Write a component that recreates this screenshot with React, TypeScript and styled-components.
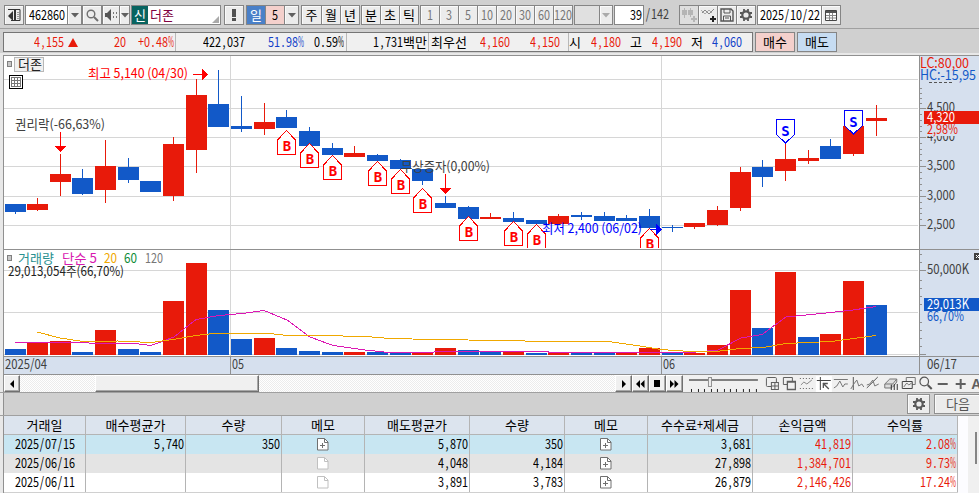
import React from 'react';
import styled, { createGlobalStyle, css } from 'styled-components';

const FONT = '"Noto Sans CJK KR", sans-serif';
const RED = '#e81a0a';
const BLUE = '#1259c8';
const NAVY = '#1240c8';

const GlobalStyle = createGlobalStyle`
  * { box-sizing: border-box; }
  body { margin: 0; overflow: hidden; background: #d0d0d0; font-family: ${FONT}; }
`;

/* ---------- fixed-pitch text: 6px for latin, 12px for hangul ---------- */

const Fixed = styled.span<{ $w?: number; $gap: number; $color: string }>`
  display: flex;
  flex: none;
  ${(p) => p.$w && css`width: ${p.$w}px;`}
  margin-left: ${(p) => p.$gap}px;
  height: 18px;
  color: ${(p) => p.$color};
  white-space: pre;
`;

const Hangul = styled.span`
  font-size: 13px;
  line-height: 18px;
`;

const Latin = styled.span<{ $n: number }>`
  flex: none;
  width: ${(p) => p.$n * 6}px;
  font-size: 14px;
  line-height: 17px;
`;

const Squeeze = styled.span`
  display: inline-block;
  transform: scaleX(0.772);
  transform-origin: 0 0;
`;

const Mark = styled.span<{ $wide: boolean }>`
  display: inline-block;
  width: 7.77px;
  text-align: ${(p) => (p.$wide ? 'left' : 'center')};
  ${(p) => p.$wide && css`transform: scaleX(0.6); transform-origin: 0 0;`}
`;

type TProps = { children: string; w?: number; gap?: number; color?: string };
function T({ children, w, gap = 0, color = '#000' }: TProps) {
  const runs = children.match(/[\uac00-\ud7a3]+|[^\uac00-\ud7a3]+/g) ?? [];
  return (
    <Fixed $w={w} $gap={gap} $color={color}>
      {runs.map((run, i) =>
        /[\uac00-\ud7a3]/.test(run) ? (
          <Hangul key={i}>{run}</Hangul>
        ) : (
          <Latin key={i} $n={run.length}>
            <Squeeze>
              {run.split(/([,.%+/])/).filter(Boolean).map((part, j) =>
                /^[,.%+/]$/.test(part) ? <Mark key={j} $wide={part === '%'}>{part}</Mark> : part,
              )}
            </Squeeze>
          </Latin>
        ),
      )}
    </Fixed>
  );
}

/* ---------- frame ---------- */

const Window = styled.div`
  width: 979px;
  height: 493px;
  overflow: hidden;
  display: flex;
  flex-direction: column;
  background: #d0d0d0;
`;

const Toolbar = styled.div`
  display: flex;
  height: 29px;
  flex: none;
  padding: 5px 0 0 4px;
  border-bottom: 1px solid #a0a0a0;
`;

const Group = styled.div<{ $gap?: number }>`
  display: flex;
  height: 20px;
  flex: none;
  margin-left: ${(p) => p.$gap ?? 0}px;
  border: 1px solid #858585;
  > * + * { border-left: 1px solid #858585; }
`;

const Key = styled.div<{ $w: number; $bg?: string; $align?: string; $flat?: boolean }>`
  display: flex;
  flex: none;
  width: ${(p) => p.$w}px;
  height: 18px;
  align-items: center;
  justify-content: ${(p) => p.$align ?? 'center'};
  overflow: hidden;
  background: ${(p) => p.$bg ?? '#ececec'};
  ${(p) => !p.$flat && css`box-shadow: inset 1px 1px 0 #fafafa;`}
`;

const StockTag = styled.div`
  display: flex;
  width: 16px;
  height: 18px;
  margin-right: 2px;
  justify-content: center;
  background: #086460;
`;

const Corner = styled.svg`
  margin: auto 1px 1px auto;
`;

/* ---------- info strip ---------- */

const InfoBar = styled.div`
  display: flex;
  flex: none;
  height: 25px;
  padding: 3px 0 0 3px;
  border-bottom: 1px solid #e8e8e8;
`;

const InfoBox = styled.div`
  display: flex;
  width: 750px;
  height: 20px;
  border: 1px solid #757575;
  background: #f0f0f0;
`;

const InfoCell = styled.div<{ $w: number }>`
  display: flex;
  flex: none;
  width: ${(p) => p.$w}px;
  & + & { border-left: 1px solid #b8b8b8; }
`;

const UpMark = styled.svg`
  margin: 5px 0 0 4px;
`;

const TradeButton = styled.div<{ $bg: string; $gap: number }>`
  display: flex;
  width: 40px;
  height: 20px;
  justify-content: center;
  margin-left: ${(p) => p.$gap}px;
  border: 1px solid #858585;
  background: ${(p) => p.$bg};
`;

/* ---------- scroll strip ---------- */

const ChartSvg = styled.svg`
  display: block;
  flex: none;
`;

const ScrollStrip = styled.div`
  display: flex;
  flex: none;
  height: 18px;
  border-bottom: 1px solid #a0a0a0;
  padding-left: 4px;
  background: #f0f0f0;
  box-shadow: inset 3px 0 #e8e8e8, inset 4px 0 #909090;
`;

const Track = styled.div`
  display: flex;
  width: 596px;
  background: repeating-conic-gradient(#ececec 0 25%, #fff 0 50%) 0 0 / 2px 2px;
`;

const ScrollButton = styled.div<{ $w: number; $gap?: number }>`
  display: flex;
  flex: none;
  align-items: center;
  justify-content: center;
  width: ${(p) => p.$w}px;
  height: 17px;
  margin-left: ${(p) => p.$gap ?? 0}px;
  background: #f0f0f0;
  border: 1px solid #fff;
  border-right-color: #707070;
  border-bottom-color: #707070;
  box-shadow: inset -1px -1px #a8a8a8;
`;

/* ---------- table ---------- */

const ActionBar = styled.div`
  display: flex;
  flex: none;
  height: 23px;
  padding: 1px 0 0 907px;
  gap: 4px;
  border-bottom: 1px solid #a0a0a0;
  box-shadow: inset 3px 0 #e8e8e8, inset 4px 0 #909090;
`;

const ActionButton = styled.div<{ $w: number }>`
  display: flex;
  flex: none;
  align-items: center;
  justify-content: center;
  width: ${(p) => p.$w}px;
  height: 20px;
  border: 1px solid #909090;
  box-shadow: inset 1px 1px #fafafa;
  background: #ececec;
`;

const TableArea = styled.div`
  display: flex;
  flex: none;
  height: 77px;
  padding-left: 4px;
  box-shadow: inset 3px 0 #e8e8e8, inset 4px 0 #909090;
`;

const Grid = styled.div`
  width: 954px;
`;

const Row = styled.div<{ $bg: string; $head?: boolean }>`
  display: grid;
  grid-template-columns: 82px 100px 96px 83px 105px 95px 83px 105px 100px 105px;
  height: 19px;
  background: ${(p) => p.$bg};
  ${(p) => p.$head && css`border-bottom: 1px solid #b4b4b4;`}
`;

const Cell = styled.div<{ $align: string }>`
  display: flex;
  align-items: flex-start;
  justify-content: ${(p) => p.$align};
  padding-right: ${(p) => (p.$align === 'flex-end' ? 1 : 0)}px;
  overflow: hidden;
  border-right: 1px solid #b4b4b4;
`;

const MemoSvg = styled.svg`
  margin-top: 3px;
`;

const Scroller = styled.div`
  display: flex;
  flex: 1;
  justify-content: flex-end;
  padding: 16px 2px 0 0;
  background: linear-gradient(90deg, #fcfcff 10px, #f0f0f0 10px);
`;

const Thumb = styled.div`
  width: 2px;
  height: 32px;
  background: #858585;
`;

/* ---------- icons ---------- */

const Svg = ({ w, h, children }: { w: number; h: number; children: React.ReactNode }) => (
  <svg width={w} height={h} viewBox={`0 0 ${w} ${h}`} fill="none">{children}</svg>
);
const Caret = ({ color = '#606060' }) => <Svg w={8} h={5}><path d="M0 0h8L4 4.5z" fill={color} /></Svg>;
const PanelIcon = () => (
  <Svg w={14} h={14}>
    <path d="M1 1.5h12v11H4" stroke="#333" /><path d="M7 2h2v11H7z" fill="#333" />
    <path d="M10 4.500h2M10 6.500h2M10 8.500h2M10 10.500h2" stroke="#999" />
    <path d="M1 8l5-5v10z" fill="#333" />
  </Svg>
);
const SearchIcon = () => (
  <Svg w={13} h={13}><circle cx="5" cy="5" r="3.8" stroke="#707070" strokeWidth="1.4" /><path d="M8 8l4 4" stroke="#707070" strokeWidth="2" /></Svg>
);
const SpeakerIcon = () => (
  <Svg w={14} h={12}><path d="M1 4h2l4-4v12L3 8H1z" fill="#555" /><path d="M9 3h1v2H9zm0 4h1v2H9zm3-4h1v2h-1zm0 4h1v2h-1z" fill="#777" /></Svg>
);
const GearIcon = () => (
  <Svg w={14} h={14}>
    <circle cx="7" cy="7" r="3.7" stroke="#585858" strokeWidth="2.2" />
    <path d="M5 1v2M9 1v2M5 11v2M9 11v2M1 5h2M1 9h2M11 5h2M11 9h2" stroke="#585858" strokeWidth="1.8" />
  </Svg>
);
const SaveIcon = () => (
  <Svg w={14} h={14}><path d="M1 1h10l2 2v10H1z" stroke="#555" strokeWidth="1.4" /><path d="M4 1v4h6V1M3.5 13V8h7v5M5 10h4" stroke="#555" /></Svg>
);
const LineAddIcon = () => (
  <Svg w={15} h={14}><path d="M1 5l3-3 4 4 5-5" stroke="#888" /><path d="M0 2l4 4 4-4 3 3" stroke="#aaa" /><path d="M12 8v6M9 11h6" stroke="#222" strokeWidth="2" /></Svg>
);
const CandleAddIcon = () => (
  <Svg w={15} h={14}><path d="M2.5 0v10M8.5 0v9" stroke="#b5b5b5" /><path d="M0 2h5v5H0zM6 2h5v5H6z" fill="#b5b5b5" /><path d="M12 8v6M9 11h6" stroke="#b5b5b5" strokeWidth="2" /></Svg>
);
const CalendarIcon = () => (
  <Svg w={12} h={11}><path d="M.5.5h11v10H.5z" stroke="#444" fill="#fff" /><path d="M1 1h10v2H1z" fill="#555" /><path d="M1 5.5h10M1 8h10M4.500 3v7M7.500 3v7" stroke="#888" /></Svg>
);
const MemoIcon = ({ on }: { on: boolean }) => {
  const c = on ? '#707070' : '#c0c0c0';
  return (
    <MemoSvg width="12" height="13" viewBox="0 0 12 13" fill="none">
      <path d="M.5.5h7l3.500 3.500v8H.5z" fill="#fff" stroke={c} /><path d="M7.500 .5V4.500H11" stroke={c} />
      {on && <path d="M5.500 5v5M3 7.500h5" stroke={c} />}
    </MemoSvg>
  );
};

const DrawTools = () => (
  <Svg w={296} h={17}>
    <g stroke="#606060">
      <path d="M6 5h69" strokeWidth="2" stroke="#808080" />
      <path d="M8.5 14v3M15.5 14v3M21.5 14v3M28.5 14v3M34.5 14v3M41.5 14v3M47.5 14v3M53.5 14v3M60.5 14v3M66.5 14v3M73.5 14v3" stroke="#222" />
      <rect x="25.5" y="2.5" width="3" height="9" fill="#eee" stroke="#909090" />
      <rect x="83.5" y="2.5" width="10" height="9" rx="1" /><rect x="88.5" y="7.5" width="7" height="7" fill="#f0f0f0" /><path d="M92 8v6M89 11h6" />
      <path d="M100.5 2.5h9v7h-9z" /><path d="M104.5 6.5h8v8h-8zM105 7h8" fill="#f0f0f0" strokeWidth="1.3" />
      <path d="M117 3.5h13M117 13.5h13" strokeDasharray="1 2" /><path d="M118 10l3-3 3 2 5-4" stroke="#888" />
    </g>
    <rect x="133" y="1" width="16" height="16" fill="#fff" />
    <g stroke="#777">
      <path d="M134 5.5h14M137.5 2v13" stroke="#444" /><path d="M140 8.5h5M140.5 8v5M140 8l6 6" stroke="#555" strokeWidth="1.3" />
      <path d="M151 4.5h14" /><path d="M151 13l3-2 3-5 3 6 2-3 3 0" />
      <path d="M170.5 2v13" stroke="#555" /><path d="M168 14l3-5 3-4 2 6 3-2 2 3" />
      <path d="M184 13L195 2" stroke="#555" /><path d="M184 10l3-1 3-4 2 6 4-2" />
      <path d="M202 9l5-5h7l-4 5zM202 9v4h7v-4M214 4v3l-4 5" fill="#ddd" /><path d="M208.5 10v5M211.5 9v6M214.5 9v6" stroke="#333" />
      <path d="M223.5 2.5h9v7h-9z" /><path d="M219.5 6.5h10v7h-10z" fill="#eee" stroke="#444" /><path d="M221 12l3-4 2 2 3-2" />
      <circle cx="241.500" cy="6.500" r="4.300" stroke="#555" strokeWidth="1.2" /><path d="M245 10l4 4" stroke="#555" strokeWidth="2" />
      <path d="M255 9h10M273 9h10M278 4v10" stroke="#606060" strokeWidth="2" />
    </g>
    <text x="288.5" y="14" fontSize="14" fontWeight="700" fill="#606060" fontFamily="Liberation Sans">A</text>
  </Svg>
);

/* ---------- chart ---------- */

// [up, bodyTop, bodyBottom, high, low, volumeTop]
const candles: [number, number, number, number, number, number][] = [
  [0, 204, 212, 204, 214, 349], [1, 204, 210, 198, 211, 342], [1, 174, 182, 154, 196, 341],
  [0, 178, 194, 169, 195, 352], [1, 166, 190, 140, 203, 330], [0, 167, 180, 158, 183, 349],
  [0, 181, 192, 181, 192, 352], [1, 144, 196, 137, 201, 301], [1, 95, 150, 79, 173, 263],
  [0, 104, 127, 70, 127, 310], [0, 126, 129, 96, 132, 339], [1, 122, 129, 103, 135, 338],
  [0, 117, 128, 110, 128, 348], [0, 131, 146, 127, 146, 351], [0, 148, 155, 143, 155, 352],
  [1, 153, 157, 146, 157, 352], [0, 155, 161, 154, 161, 352], [0, 160, 169, 159, 169, 353],
  [0, 169, 181, 169, 185, 353], [0, 203, 208, 196, 208, 348], [0, 207, 219, 206, 219, 350],
  [1, 217, 219, 213, 219, 352], [0, 218, 222, 212, 222, 352], [0, 220, 224, 220, 224, 353],
  [1, 216, 224, 214, 224, 353], [0, 215, 217, 212, 220, 353], [0, 216, 221, 212, 221, 353],
  [0, 218, 221, 215, 221, 353], [0, 216, 228, 209, 228, 348], [0, 227, 228, 225, 232, 352],
  [1, 223, 227, 223, 229, 353], [1, 210, 225, 206, 226, 345], [1, 172, 208, 167, 211, 290],
  [0, 167, 177, 160, 187, 328], [1, 159, 171, 140, 181, 272], [1, 158, 161, 150, 164, 337],
  [0, 146, 159, 139, 159, 334], [1, 126, 154, 126, 156, 281], [1, 118, 121, 105, 136, 305],
];
// Sessions whose volume moved against the price.
const diverging = new Set([18, 19, 21, 22, 27, 28, 35, 36, 38]);
const slotX = (i: number) => Math.floor(5 + 22.66 * i);

const buys = [[286, 130], [309, 143], [332, 155], [377, 161], [400, 169], [422, 188], [468, 216], [513, 221], [536, 224], [649, 228]];
const sells = [[785, 119], [853, 110]];

const ma5 = '15,342.5 83,342.5 94,343.5 135,343.5 151,345.5 174,337 196,319.5 219,315.5 242,313.5 264,310.5 287,320 310,337 333,345.5 365,350 389,352.5 433,352.5 435,351.5 548,351.5 549,352.5 690,352.5 718,350 741,338 762,334.5 786,317 831,312.5 853,310 876,306.5';
const ma20 = '37,332 60,338 83,341.5 118,341 151,342.5 173,339.5 196,335.5 214,333.5 270,333.5 287,335.5 320,335.5 366,336.5 390,338.5 434,339.5 502,340.5 548,341.5 608,341.5 640,346 661,349.5 690,351.5 716,351.5 740,348.5 763,347.5 786,343.5 831,341.5 876,335.5';

type LabelProps = { x: number; y: number; w: number; fill?: string; size?: number; children: string };
const Label = ({ x, y, w, fill = '#404040', size = 14, children }: LabelProps) => (
  <text x={x} y={y} textLength={w} lengthAdjust="spacingAndGlyphs" fontSize={size} fill={fill} fontFamily={FONT}>{children}</text>
);

const MARK_FONT = 'DejaVu Sans Mono, monospace';

const Chart = () => (
  <ChartSvg width="979" height="321" viewBox="0 54 979 321" shapeRendering="crispEdges">
    <rect x="0" y="54" width="3" height="321" fill="#e8e8e8" />
    <rect x="3" y="54" width="976" height="1" fill="#e8e8e8" />
    <rect x="3" y="55" width="976" height="320" fill="#fff" />
    <rect x="920" y="56" width="59" height="319" fill="#d6e0ee" />
    <rect x="4" y="357" width="975" height="17" fill="#d6e0ee" />
    {[79, 108, 137, 166, 196, 225, 270, 312, 354].map((y) => <rect key={y} x="4" y={y} width="914" height="1" fill="#d6d6d6" />)}
    {[230, 661].map((x) => <rect key={x} x={x} y="56" width="1" height="300" fill="#d6d6d6" />)}
    {[230, 661].map((x) => <rect key={x} x={x} y="357" width="1" height="17" fill="#909090" />)}
    {candles.map(([up, top, bottom, high, low, vol], i) => {
      const volUp = diverging.has(i) ? !up : !!up;
      return (
        <g key={i} fill={up ? RED : BLUE}>
          <rect x={slotX(i)} y={top} width="21" height={bottom - top} />
          <rect x={slotX(i) + 10} y={high} width="1" height={low - high} />
          <rect x={slotX(i)} y={vol} width="21" height={355 - vol} fill={volUp ? RED : BLUE} />
        </g>
      );
    })}
    <polyline points={ma5} fill="none" stroke="#dc18b4" />
    <polyline points={ma20} fill="none" stroke="#f0a800" />

    <clipPath id="price"><rect x="4" y="56" width="914" height="192" /></clipPath>
    <g clipPath="url(#price)">
      {buys.map(([x, y]) => (
        <g key={x}>
          <path d={`M${x + 0.5} ${y + 0.5}l9 9.5v14h-18v-14z`} fill="#fff" stroke="#f00" />
          <text x={x + 1} y={y + 21} textAnchor="middle" fontSize="14" fontWeight="700" fill="#f00" fontFamily={MARK_FONT}>B</text>
        </g>
      ))}
    </g>
    {sells.map(([x, y]) => (
      <g key={x}>
        <path d={`M${x - 8.5} ${y + 0.5}h18v15l-9 8.5l-9 -8.5z`} fill="#fff" stroke="#00f" />
        <text x={x + 0.5} y={y + 17} textAnchor="middle" fontSize="14" fontWeight="700" fill="#00f" fontFamily={MARK_FONT}>S</text>
      </g>
    ))}

    <rect x="7.5" y="61.5" width="4" height="5" fill="#c8c8c8" stroke="#808080" />
    <rect x="14.5" y="57.5" width="29" height="14" fill="#f0f0f0" stroke="#b8b8b8" />
    <Label x={18} y={69} w={24} size={13} fill="#222">더존</Label>
    <rect x="9.5" y="75.5" width="13" height="13" fill="#fff" stroke="#000" />
    <path d="M11.5 77.5h9v9h-9zM12 80.5h8M12 83.5h8M14.5 78v8M17.5 78v8" fill="none" stroke="#777" />
    <Label x={88} y={78} w={100} size={13} fill="#f00">최고 5,140 (04/30)</Label>
    <path d="M193 74h9v-5l6 5.5l-6 5.5v-5h-9z" fill="#f00" />
    <Label x={15} y={129} w={90} size={13}>권리락(-66,63%)</Label>
    <path d="M60 132h1v14h5l-5.5 6l-5.5 -6h5z" fill="#f00" />
    <Label x={401} y={171} w={89} size={13}>무상증자(0,00%)</Label>
    <path d="M445 174h1v14h5l-5.5 6l-5.5 -6h5z" fill="#f00" />
    <Label x={542} y={233} w={100} size={13} fill="#00f">최저 2,400 (06/02)</Label>
    <path d="M650 229h6v-5l6 5.5l-6 5.5v-5h-6z" fill="#00f" />

    <rect x="7.5" y="255.5" width="4" height="5" fill="#c8c8c8" stroke="#808080" />
    <Label x={18} y={263} w={36} size={13} fill="#289090">거래량</Label>
    <Label x={62} y={263} w={35} size={13} fill="#d818b0">단순 5</Label>
    <Label x={104} y={263} w={13} fill="#f0a800">20</Label>
    <Label x={124} y={263} w={13} fill="#108c38">60</Label>
    <Label x={145} y={263} w={18} fill="#777">120</Label>
    <Label x={8} y={276} w={116} size={13} fill="#222">29,013,054주(66,70%)</Label>

    <rect x="919" y="56" width="1" height="318" fill="#909090" />
    <rect x="3" y="55" width="976" height="1" fill="#909090" />
    <rect x="3" y="249" width="976" height="1" fill="#909090" />
    <rect x="3" y="356" width="976" height="1" fill="#909090" />
    <rect x="3" y="374" width="976" height="1" fill="#909090" />
    <rect x="3" y="55" width="1" height="320" fill="#909090" />
    {[88, 93, 98, 103, 114, 120, 126, 131, 143, 149, 154, 160, 172, 178, 184, 190, 202, 208, 213, 219, 254, 262, 280, 288, 296, 304, 322, 330, 338, 346].map((y) => (
      <rect key={y} x="920" y={y} width="2" height="1" fill="#909090" />
    ))}
    {[108, 137, 166, 196, 225, 270, 354].map((y) => <rect key={y} x="920" y={y} width="6" height="1" fill="#909090" />)}
    <path d="M929 82.5h25" stroke="#555" strokeDasharray="3 2" />
    <Label x={920} y={68} w={49} fill={RED}>LC:80,00</Label>
    <Label x={920} y={80} w={56} fill={BLUE}>HC:-15,95</Label>
    <Label x={927} y={112} w={28}>4,500</Label>
    <Label x={927} y={141} w={28}>4,000</Label>
    <rect x="926" y="124" width="53" height="12" fill="#d6e0ee" />
    <rect x="924" y="111" width="55" height="13" fill={RED} />
    <Label x={927} y={122} w={28} fill="#fff">4,320</Label>
    <Label x={927} y={134} w={31} fill={RED}>2,98%</Label>
    <Label x={927} y={170} w={28}>3,500</Label>
    <Label x={927} y={200} w={28}>3,000</Label>
    <Label x={927} y={229} w={28}>2,500</Label>
    <rect x="974" y="253" width="5" height="7" fill="#404040" />
    <path d="M976 255l3 3M976 258l3 -3" stroke="#fff" />
    <Label x={927} y={274} w={42}>50,000K</Label>
    <rect x="924" y="298" width="55" height="13" fill={BLUE} />
    <Label x={927} y={309} w={42} fill="#fff">29,013K</Label>
    <Label x={927} y={321} w={37} fill={BLUE}>66,70%</Label>
    <Label x={5} y={369} w={42}>2025/04</Label>
    <Label x={232} y={369} w={12}>05</Label>
    <Label x={663} y={369} w={12}>06</Label>
    <Label x={927} y={369} w={30}>06/17</Label>
  </ChartSvg>
);

/* ---------- table data ---------- */

const headers = ['거래일', '매수평균가', '수량', '메모', '매도평균가', '수량', '메모', '수수료+제세금', '손익금액', '수익률'];
const rows = [
  { bg: '#c8e6f2', cells: ['2025/07/15', '5,740', '350', '+', '5,870', '350', '+', '3,681', '41,819', '2.08%'] },
  { bg: '#e4e4e4', cells: ['2025/06/16', '', '', '-', '4,048', '4,184', '+', '27,898', '1,384,701', '9.73%'] },
  { bg: '#ffffff', cells: ['2025/06/11', '', '', '-', '3,891', '3,783', '+', '26,879', '2,146,426', '17.24%'] },
];

export default function App() {
  return (
    <Window>
      <GlobalStyle />
      <Toolbar>
        <Group><Key $w={18}><PanelIcon /></Key></Group>
        <Group $gap={1}>
          <Key $w={41} $bg="#fff" $flat $align="flex-end"><T w={38}>462860</T></Key>
          <Key $w={14}><Caret /></Key>
        </Group>
        <Group><Key $w={18}><SearchIcon /></Key></Group>
        <Group><Key $w={16}><SpeakerIcon /></Key><Key $w={10}><Caret /></Key></Group>
        <Group $gap={1}>
          <Key $w={88} $bg="#fff" $flat $align="flex-start">
            <StockTag><T color="#fff">신</T></StockTag>
            <T color="#800040">더존</T>
            <Corner width="7" height="7"><path d="M7 0v7H0z" fill="#aaa" /></Corner>
          </Key>
        </Group>
        <Group $gap={3}><Key $w={18}><Svg w={4} h={12}><path d="M0 0h4v8H0zM0 9h4v3H0z" fill="#505050" /></Svg></Key></Group>
        <Group $gap={2}>
          <Key $w={18} $bg="#4a80c8" $flat><T color="#fff">일</T></Key>
          <Key $w={19} $bg="#f4d0cc" $flat><T>5</T></Key>
          <Key $w={14}><Caret /></Key>
        </Group>
        <Group $gap={2}><Key $w={19}><T>주</T></Key><Key $w={19}><T>월</T></Key><Key $w={19}><T>년</T></Key></Group>
        <Group $gap={1}><Key $w={18}><T>분</T></Key><Key $w={19}><T>초</T></Key><Key $w={19}><T>틱</T></Key></Group>
        <Group $gap={1}>
          {['1', '3', '5', '10', '20', '30', '60', '120'].map((n, i) => (
            <Key key={n} $w={i ? 19 : 18}><T color="#777">{n}</T></Key>
          ))}
        </Group>
        <Group $gap={1}><Key $w={24} $bg="#e0e0e0" $flat /><Key $w={13}><Caret color="#aaa" /></Key></Group>
        <Group $gap={1}><Key $w={28} $bg="#fff" $flat $align="flex-end"><T w={13}>39</T></Key></Group>
        <T gap={1} w={25} color="#404040">/142</T>
        <Group $gap={9}>
          <Key $w={18} $flat $bg="#dedede"><CandleAddIcon /></Key><Key $w={19}><LineAddIcon /></Key>
          <Key $w={19}><SaveIcon /></Key><Key $w={19}><GearIcon /></Key>
        </Group>
        <Group $gap={1}>
          <Key $w={63} $bg="#fff" $flat><T>2025/10/22</T></Key>
          <Key $w={19}><CalendarIcon /></Key>
        </Group>
      </Toolbar>

      <InfoBar>
        <InfoBox>
          <InfoCell $w={171}>
            <T gap={30} color={RED}>4,155</T>
            <UpMark width="10" height="9"><path d="M5 0l5 9H0z" fill={RED} /></UpMark>
            <T gap={36} color={RED}>20</T>
            <T gap={12} color={RED}>+0.48%</T>
          </InfoCell>
          <InfoCell $w={171}>
            <T gap={27}>422,037</T>
            <T gap={23} color={NAVY}>51.98%</T>
            <T gap={10}>0.59%</T>
          </InfoCell>
          <InfoCell $w={82}><T gap={26}>1,731백만</T></InfoCell>
          <InfoCell $w={140}>
            <T gap={2}>최우선</T>
            <T gap={13} color={RED}>4,160</T>
            <T gap={20} color={RED}>4,150</T>
          </InfoCell>
          <InfoCell $w={184}>
            <T>시</T><T gap={10} color={RED}>4,180</T>
            <T gap={9}>고</T><T gap={10} color={RED}>4,190</T>
            <T gap={9}>저</T><T gap={9} color={NAVY}>4,060</T>
          </InfoCell>
        </InfoBox>
        <TradeButton $gap={2} $bg="#f4d0cc"><T>매수</T></TradeButton>
        <TradeButton $gap={2} $bg="#c6dcf2"><T>매도</T></TradeButton>
      </InfoBar>

      <Chart />

      <ScrollStrip>
        <ScrollButton $w={16}><Svg w={5} h={8}><path d="M4 0v8L0 4z" fill="#000" /></Svg></ScrollButton>
        <Track><ScrollButton $w={164} $gap={75} /></Track>
        <ScrollButton $w={17}><Svg w={5} h={8}><path d="M1 0v8l4-4z" fill="#000" /></Svg></ScrollButton>
        <ScrollButton $w={17}><Svg w={9} h={8}><path d="M4 0v8L0 4zM8.5 0v8L4.5 4z" fill="#000" /></Svg></ScrollButton>
        <ScrollButton $w={17}><Svg w={7} h={8}><path d="M0 0h6v7H0z" fill="#000" /></Svg></ScrollButton>
        <ScrollButton $w={17}><Svg w={9} h={8}><path d="M0 0v8l4-4zM4.5 0v8l4-4z" fill="#000" /></Svg></ScrollButton>
        <DrawTools />
      </ScrollStrip>

      <ActionBar>
        <ActionButton $w={23}><GearIcon /></ActionButton>
        <ActionButton $w={48}><T color="#555">다음</T></ActionButton>
      </ActionBar>

      <TableArea>
        <Grid>
          <Row $bg="#dce4ee" $head>
            {headers.map((h, i) => <Cell key={i} $align="center"><T>{h}</T></Cell>)}
          </Row>
          {rows.map((r) => (
            <Row key={r.cells[0]} $bg={r.bg}>
              {r.cells.map((c, i) => (
                <Cell key={i} $align={i === 0 || i === 3 || i === 6 ? 'center' : 'flex-end'}>
                  {i === 3 || i === 6 ? <MemoIcon on={c === '+'} /> : c && <T color={i > 7 ? RED : '#000'}>{c}</T>}
                </Cell>
              ))}
            </Row>
          ))}
        </Grid>
        <Scroller><Thumb /></Scroller>
      </TableArea>
    </Window>
  );
}
